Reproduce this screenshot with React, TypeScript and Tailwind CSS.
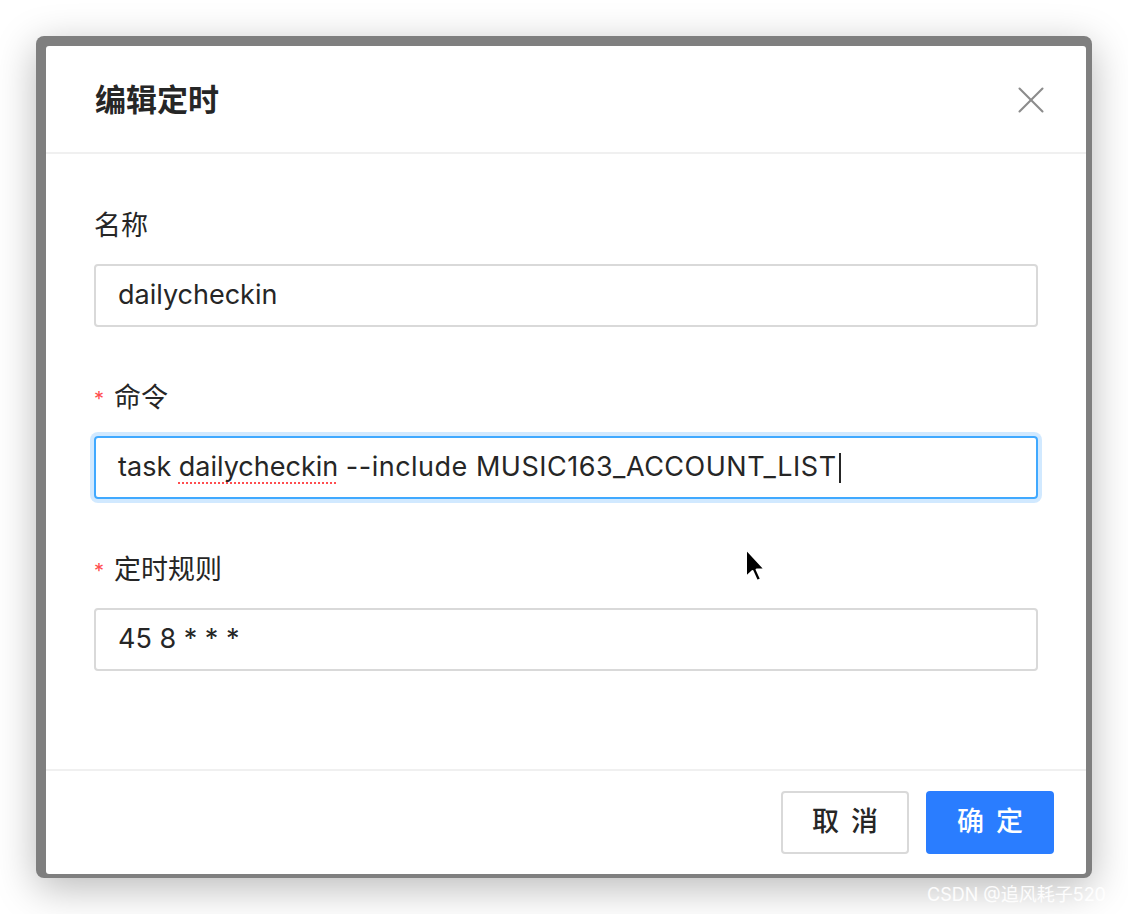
import { X } from 'lucide-react';

const font = "font-['Inter','Noto_Sans_CJK_SC',sans-serif]";

function Label({ text, required }: { text: string; required?: boolean }) {
  return (
    <div className="flex h-[40px] items-center text-[27px] leading-[40px] text-[#262626]">
      {required && <span className="mr-[10px] mt-[2px] text-[20px] text-[#ff4d4f]">*</span>}
      <span>{text}</span>
    </div>
  );
}

function Field({ children, focused }: { children: React.ReactNode; focused?: boolean }) {
  return (
    <div
      className={
        focused
          ? 'mt-[18px] flex h-[63px] items-center rounded-[4px] border-2 border-[#40a9ff] px-[22px] text-[27px] text-[#262626] shadow-[0_0_0_4px_rgba(24,144,255,0.2)]'
          : 'mt-[18px] flex h-[63px] items-center rounded-[4px] border-2 border-[#d9d9d9] px-[22px] text-[27px] text-[#262626]'
      }
    >
      {children}
    </div>
  );
}

export default function App() {
  return (
    <div className={`relative h-[914px] w-[1128px] overflow-hidden bg-white pl-[36px] pt-[36px] ${font}`}>
      <div className="h-[842px] w-[1056px] rounded-[8px] bg-[#7f7f7f] pb-[4px] pl-[10px] pr-[6px] pt-[10px] shadow-[0_10px_40px_rgba(0,0,0,0.28)]">
        <div className="flex h-full flex-col rounded-[3px] bg-white">
          {/* header */}
          <div className="flex h-[108px] items-center justify-between border-b-2 border-[#f0f0f0] pl-[49px] pr-[32px]">
            <span className="mt-[2px] text-[31px] font-semibold text-[#262626]">编辑定时</span>
            <X className="mt-[2px] h-[46px] w-[46px] text-[#8c8c8c]" strokeWidth={1.1} />
          </div>

          {/* body */}
          <div className="flex-1 px-[48px] pt-[52px]">
            <Label text="名称" />
            <Field>dailycheckin</Field>

            <div className="mt-[51px]">
              <Label text="命令" required />
            </div>
            <Field focused>
              <span className="whitespace-pre">
                task{' '}
                <span className="underline decoration-[#ff4d4f] decoration-dotted decoration-2 underline-offset-[6px]">
                  dailycheckin
                </span>{' '}
                <span className="tracking-[0.5px]">--include MUSIC163_ACCOUNT_LIST</span>
              </span>
              <span className="ml-[2px] h-[30px] w-[2px] bg-[#262626]" />
            </Field>

            <div className="mt-[51px]">
              <Label text="定时规则" required />
            </div>
            <Field>45 8 * * *</Field>
          </div>

          {/* footer */}
          <div className="flex h-[105px] items-center justify-end gap-[17px] border-t-2 border-[#f0f0f0] pr-[32px]">
            <button className="flex h-[63px] w-[128px] items-center justify-center rounded-[4px] border-2 border-[#d9d9d9] bg-white text-[27px] font-medium tracking-[12px] text-[#262626]">
              <span className="pl-[12px]">取消</span>
            </button>
            <button className="flex h-[63px] w-[128px] items-center justify-center rounded-[4px] bg-[#2a7dff] text-[27px] font-medium tracking-[12px] text-white">
              <span className="pl-[12px]">确定</span>
            </button>
          </div>
        </div>
      </div>

      {/* mouse cursor */}
      <svg className="absolute left-[744px] top-[547px]" width="24" height="38" viewBox="0 0 24 38">
        <path
          d="M2 2 L2 30 L8.5 24 L13 34 L17 32.2 L12.6 22.6 L21 22.6 Z"
          fill="#000"
          stroke="#fff"
          strokeWidth="2"
          strokeLinejoin="round"
        />
      </svg>

      {/* watermark */}
      <div className="absolute left-[927px] top-[881px] whitespace-nowrap text-[18px] text-white/90">CSDN @追风耗子520</div>
    </div>
  );
}
